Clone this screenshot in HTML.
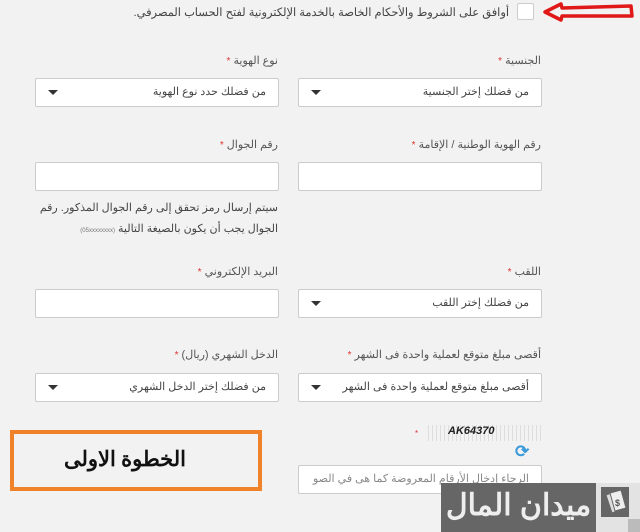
<!DOCTYPE html>
<html><head><meta charset="utf-8"><style>
*{margin:0;padding:0;box-sizing:border-box}
body{width:640px;height:532px;background:#f2f2f2;position:relative;overflow:hidden;font-family:"Liberation Sans","Noto Sans CJK SC",sans-serif;color:#444;font-size:11px}
.a{position:absolute}
.lbl{position:absolute;direction:rtl;text-align:right;font-size:11px;color:#555;white-space:nowrap}
.lbl b{color:#d33;font-weight:normal;font-size:10px}
.box{position:absolute;background:#fff;border:1px solid #ccc;border-radius:2px;height:29px;width:244px}
.sel{direction:rtl;font-size:11px;color:#444;padding:0 12px;line-height:27px;white-space:nowrap;overflow:hidden}
.car{position:absolute;left:12px;top:11px;width:0;height:0;border-left:5px solid transparent;border-right:5px solid transparent;border-top:5px solid #333}
</style></head><body>
<svg class="a" style="left:540px;top:1px" width="96" height="22" viewBox="0 0 96 22"><path d="M5 11 L21 3 L22 7 L91 5 L92 15 L22 15 L21 19 Z" fill="none" stroke="#e01818" stroke-width="3.5" stroke-linejoin="round"/></svg>
<div class="a" style="left:517px;top:3px;width:17px;height:17px;background:#fff;border:1px solid #ccc;border-radius:2px"></div>
<div class="lbl" style="right:131px;top:5px;color:#444;font-size:11.4px">أوافق على الشروط والأحكام الخاصة بالخدمة الإلكترونية لفتح الحساب المصرفي.</div>

<div class="lbl" style="right:99px;top:54px">الجنسية <b>*</b></div>
<div class="lbl" style="right:362px;top:54px">نوع الهوية <b>*</b></div>
<div class="box sel" style="left:298px;top:78px">من فضلك إختر الجنسية<div class="car"></div></div>
<div class="box sel" style="left:35px;top:78px">من فضلك حدد نوع الهوية<div class="car"></div></div>

<div class="lbl" style="right:99px;top:138px">رقم الهوية الوطنية / الإقامة <b>*</b></div>
<div class="lbl" style="right:362px;top:138px">رقم الجوال <b>*</b></div>
<div class="box" style="left:298px;top:162px"></div>
<div class="box" style="left:35px;top:162px"></div>
<div class="lbl" style="right:362px;top:201px;color:#444">سيتم إرسال رمز تحقق إلى رقم الجوال المذكور. رقم</div>
<div class="lbl" style="right:362px;top:222px;color:#444">الجوال يجب أن يكون بالصيغة التالية <span style="font-size:6px;color:#777">(05xxxxxxxx)</span></div>

<div class="lbl" style="right:99px;top:265px">اللقب <b>*</b></div>
<div class="lbl" style="right:362px;top:265px">البريد الإلكتروني <b>*</b></div>
<div class="box sel" style="left:298px;top:289px">من فضلك إختر اللقب<div class="car"></div></div>
<div class="box" style="left:35px;top:289px"></div>

<div class="lbl" style="right:99px;top:348px">أقصى مبلغ متوقع لعملية واحدة فى الشهر <b>*</b></div>
<div class="lbl" style="right:362px;top:348px">الدخل الشهري (ريال) <b>*</b></div>
<div class="box sel" style="left:298px;top:373px">أقصى مبلغ متوقع لعملية واحدة فى الشهر<div class="car"></div></div>
<div class="box sel" style="left:35px;top:373px">من فضلك إختر الدخل الشهري<div class="car"></div></div>

<div class="a" style="left:415px;top:429px;color:#d33;font-size:8px">*</div>
<div class="a" style="left:425px;top:425px;width:116px;height:16px;background:repeating-linear-gradient(90deg,#f2f2f2 0 3px,#ddd 3px 4px)"></div>
<div class="a" style="left:448px;top:425px;font-style:italic;font-weight:bold;font-size:11px;color:#222">AK64370</div>
<div class="a" style="left:515px;top:442px;color:#3a9ad9;font-size:17px;font-weight:bold">⟳</div>
<div class="box sel" style="left:298px;top:465px;color:#888">الرجاء إدخال الأرقام المعروضة كما هى في الصو</div>

<div class="a" style="left:10px;top:430px;width:252px;height:61px;border:4px solid #f0832a;background:#f2f2f2"></div>
<div class="a" style="left:10px;top:447px;width:252px;text-align:center;padding-right:22px;font-size:21px;font-weight:bold;color:#111;direction:rtl;font-family:'Liberation Serif','Noto Sans CJK SC',serif">الخطوة الاولى</div>

<div class="a" style="left:441px;top:483px;width:199px;height:49px;background:#e3e3e3"></div>
<div class="a" style="left:441px;top:483px;width:155px;height:49px;background:#666;color:#eee;font-size:30px;font-weight:bold;text-align:center;line-height:46px;direction:rtl">ميدان المال</div>
<div class="a" style="left:601px;top:487px;width:28px;height:30px;background:#666"></div>
<svg class="a" style="left:601px;top:487px" width="28" height="30" viewBox="0 0 28 30"><path d="M5 8 L16 4 L22 22 L11 26 Z" fill="#ddd" stroke="#666"/><path d="M9 6 L20 3 L25 21 L14 24 Z" fill="#eee" stroke="#666"/><text x="14" y="19" font-size="9" font-weight="bold" fill="#555" font-family="Liberation Sans">$</text></svg>
<div class="a" style="left:628px;top:519px;width:12px;height:13px;background:#bbb"></div>
</body></html>
